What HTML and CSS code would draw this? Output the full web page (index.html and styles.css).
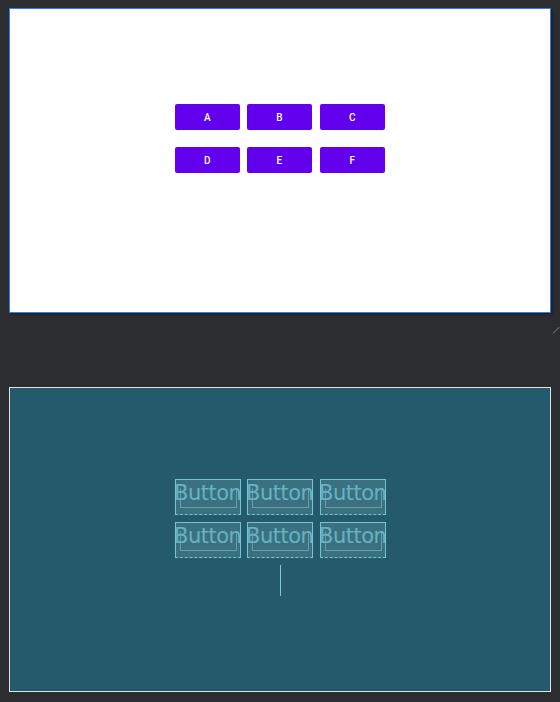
FILE: index.html
```html
<!DOCTYPE html>
<html>
<head>
<meta charset="utf-8">
<link rel="stylesheet" href="styles.css">
</head>
<body>
<div class="canvas">
  <div class="design">
    <div class="grid">
      <div class="row">
        <div class="btn">A</div>
        <div class="btn g7">B</div>
        <div class="btn g8">C</div>
      </div>
      <div class="row">
        <div class="btn">D</div>
        <div class="btn g7">E</div>
        <div class="btn g8">F</div>
      </div>
    </div>
  </div>
  <div class="resize"></div>
  <div class="blueprint">
    <div class="bgrid">
      <div class="brow">
        <div class="bbtn"><span class="inner"></span><span class="label">Button</span></div>
        <div class="bbtn g6"><span class="inner"></span><span class="label">Button</span></div>
        <div class="bbtn g7"><span class="inner"></span><span class="label">Button</span></div>
      </div>
      <div class="brow">
        <div class="bbtn"><span class="inner"></span><span class="label">Button</span></div>
        <div class="bbtn g6"><span class="inner"></span><span class="label">Button</span></div>
        <div class="bbtn g7"><span class="inner"></span><span class="label">Button</span></div>
      </div>
      <div class="vline"></div>
    </div>
  </div>
</div>
</body>
</html>
```

FILE: styles.css
```css
html, body {
  margin: 0;
  padding: 0;
  background: #2b2d30;
  width: 560px;
  height: 702px;
  overflow: hidden;
  font-family: Roboto, "Liberation Sans", sans-serif;
}
.canvas {
  position: relative;
  padding: 8px 0 0 9px;
}
.design {
  box-sizing: border-box;
  width: 542px;
  height: 305px;
  background: #ffffff;
  border: 1px solid #2a7df5;
  box-shadow: 2px 2px 2px rgba(0,0,0,0.25);
}
.grid {
  padding: 95px 0 0 165px;
  display: flex;
  flex-direction: column;
  gap: 17px;
}
.row {
  display: flex;
}
.btn {
  width: 65px;
  height: 26px;
  background: #6200ee;
  border-radius: 2px;
  color: #ffffff;
  font-size: 10px;
  font-weight: 500;
  display: flex;
  align-items: center;
  justify-content: center;
  letter-spacing: 0.3px;
}
.g7 { margin-left: 7px; }
.g8 { margin-left: 8px; }
.g6 { margin-left: 6px; }
.resize {
  position: absolute;
  left: 553px;
  top: 333px;
  width: 9px;
  height: 1px;
  background: #6b6e73;
  transform: rotate(-45deg);
  transform-origin: left center;
}
.blueprint {
  box-sizing: border-box;
  margin-top: 74px;
  width: 542px;
  height: 305px;
  background: #245b6c;
  border: 1px solid #dfe3e6;
}
.bgrid {
  padding: 91px 0 0 165px;
  display: flex;
  flex-direction: column;
  gap: 7px;
}
.brow {
  display: flex;
}
.bbtn {
  position: relative;
  box-sizing: border-box;
  width: 66px;
  height: 36px;
  background: #3a7181;
  border: 1px solid #78c3d3;
  border-bottom-style: dashed;
  overflow: hidden;
}
.inner {
  position: absolute;
  left: 4px;
  right: 3px;
  top: 8px;
  bottom: 6px;
  border: 1px solid #6a9cab;
  border-top-color: transparent;
}
.label {
  position: absolute;
  left: -2px;
  top: 1px;
  font-family: "DejaVu Sans", sans-serif;
  font-size: 21px;
  letter-spacing: -0.5px;
  line-height: 24px;
  color: #68b1c2;
  white-space: nowrap;
}
.vline {
  width: 1px;
  height: 31px;
  background: #7cc7d8;
  margin-left: 105px;
}
```
